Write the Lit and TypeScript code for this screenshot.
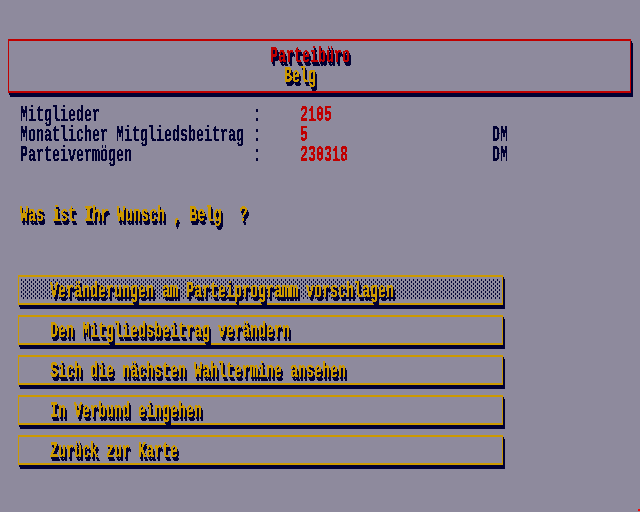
import { LitElement, html, css } from "lit";
import { customElement } from "lit/decorators.js";

interface Row { label: string; value: string; unit: string; }

const rows: Row[] = [
  { label: "Mitglieder", value: "2105", unit: "" },
  { label: "Monatlicher Mitgliedsbeitrag", value: "5", unit: "DM" },
  { label: "Parteivermögen", value: "230318", unit: "DM" },
];

const actions = [
  "Veränderungen am Parteiprogramm vorschlagen",
  "Den Mitgliedsbeitrag verändern",
  "Sich die nächsten Wahltermine ansehen",
  "In Verbund eingehen",
  "Zurück zur Karte",
];

@customElement("app-root")
export class AppRoot extends LitElement {
  static styles = css`
    :host {
      --bg: #8e8a9d;
      --ink: #000033;
      --red: #c00000;
      --gold: #cc9900;
      display: block;
      position: relative;
      box-sizing: border-box;
      width: 640px;
      height: 512px;
      padding-top: 39px;
      overflow: hidden;
      background: var(--bg);
      color: var(--ink);
      font: bold 13.33px/12px "Liberation Mono", monospace;
    }
    .defs { position: absolute; width: 0; height: 0; }
    .text {
      display: block;
      height: 12px;
      margin-bottom: 8px;
      white-space: pre;
      transform: scaleY(1.6);
      transform-origin: 0 0;
    }
    .crisp { filter: url(#crisp); }
    .shadow { filter: url(#crisp) drop-shadow(1px 2px 0 var(--ink)) drop-shadow(1px 2px 0 var(--ink)); }
    .frame {
      box-sizing: border-box;
      border: solid;
      border-width: 2px 1px;
      background: var(--bg);
      box-shadow: 1px 2px 0 var(--ink), 2px 4px 0 var(--ink);
    }
    .header {
      margin-left: 8px;
      width: 623px;
      height: 54px;
      padding: 7px 0 0 261px;
      color: var(--red);
    }
    .name { color: var(--gold); padding-left: 14px; }
    .stats { margin: 14px 0 0 20px; display: flow-root; }
    .row { display: grid; grid-template-columns: 233px 47px 192px auto; }
    .value { color: var(--red); }
    .question {
      display: flex;
      gap: 18px;
      margin: 40px 0 0 20px;
      color: var(--gold);
      letter-spacing: 0.06px;
    }
    .menu {
      display: flex;
      flex-direction: column;
      gap: 10px;
      margin: 48px 0 0 18px;
      width: 485px;
    }
    .item { height: 30px; color: var(--gold); padding: 2px 2px 4px; }
    .fill { height: 20px; padding-left: 29px; display: flow-root; }
    .active .fill {
      background: url("data:image/svg+xml,%3Csvg xmlns='http://www.w3.org/2000/svg' width='4' height='4' shape-rendering='crispEdges'%3E%3Cpath fill='%23000033' d='M0 0h1v2h-1zM2 2h1v2h-1z'/%3E%3C/svg%3E");
    }
    .label { margin-top: 4px; }
    .cursor {
      position: absolute;
      right: 0;
      bottom: 1px;
      width: 2px;
      height: 2px;
      background: #ff0000;
    }
  `;

  render() {
    return html`
      <svg class="defs"><filter id="crisp" x="-5%" y="-50%" width="110%" height="200%" color-interpolation-filters="sRGB">
        <feComponentTransfer><feFuncA type="discrete" tableValues="0 0 1 1 1"></feFuncA></feComponentTransfer>
      </filter></svg>
      <header class="frame header">
        <div class="shadow"><span class="text">Parteibüro</span></div>
        <div class="shadow name"><span class="text">Belg</span></div>
      </header>
      <section class="stats crisp">
        ${rows.map((r) => html`<div class="row">
          <span class="text">${r.label}</span><span class="text">:</span>
          <span class="text value">${r.value}</span><span class="text">${r.unit}</span>
        </div>`)}
      </section>
      <div class="question shadow"><span class="text">Was ist Ihr Wunsch , Belg</span><span class="text">?</span></div>
      <nav class="menu">
        ${actions.map((a, i) => html`<div class="frame item ${i === 0 ? "active" : ""}">
          <div class="fill"><div class="label shadow"><span class="text">${a}</span></div></div>
        </div>`)}
      </nav>
      <div class="cursor"></div>
    `;
  }
}
